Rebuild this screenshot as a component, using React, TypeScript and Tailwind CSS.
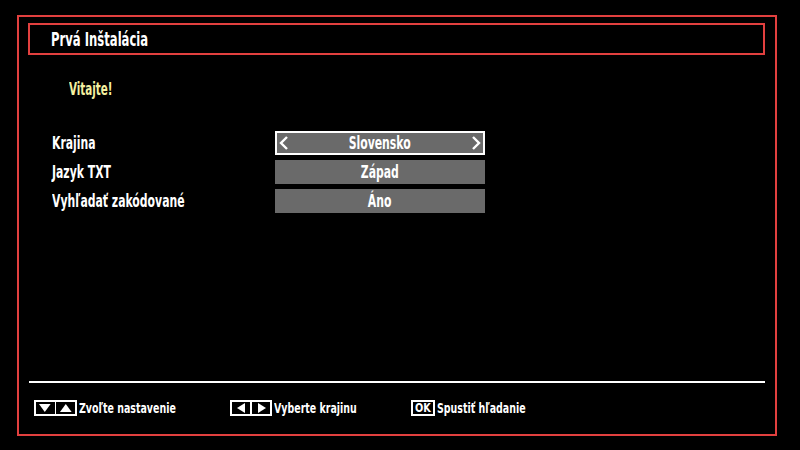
import React from "react";

const font = {
  fontFamily: '"DejaVu Sans Condensed", "DejaVu Sans", sans-serif',
};

function KeyBox({ children, w }: { children: React.ReactNode; w: string }) {
  return (
    <div className={`flex h-[16px] ${w} shrink-0 items-center justify-center gap-[2px] border-2 border-white px-[1px]`}>
      {children}
    </div>
  );
}

function Tri({ dir }: { dir: "up" | "down" | "left" | "right" }) {
  const pts = {
    down: "1,2 13,2 7,10",
    up: "1,10 13,10 7,2",
    left: "10,1 10,11 2,6",
    right: "2,1 2,11 10,6",
  }[dir];
  const wide = dir === "up" || dir === "down";
  return (
    <svg width={wide ? 17 : 15} height={12} viewBox={wide ? "-1 0 16 12" : "-1 0 13 12"}>
      <polygon points={pts} fill="white" />
    </svg>
  );
}

function Chevron({ right }: { right?: boolean }) {
  return (
    <svg width={10} height={16} viewBox="0 0 10 16">
      <polyline
        points={right ? "2,2 8,8 2,14" : "8,2 2,8 8,14"}
        fill="none"
        stroke="white"
        strokeWidth={2.4}
      />
    </svg>
  );
}

export default function App() {
  const rows = [
    { label: "Krajina", value: "Slovensko", active: true },
    { label: "Jazyk TXT", value: "Západ", active: false },
    { label: "Vyhľadať zakódované", value: "Áno", active: false },
  ];

  return (
    <div className="h-[450px] w-[800px] bg-black pl-[17px] pt-[15px] text-white" style={font}>
      <div className="flex h-[421px] w-[760px] flex-col border-2 border-[#e2403f]">
        <div className="ml-[9px] mt-[6px] flex h-[32px] w-[737px] items-center border-2 border-[#e2403f] pl-[21px] text-[19px] font-bold">
          <span className="inline-block origin-left scale-x-[0.68] whitespace-nowrap">Prvá Inštalácia</span>
        </div>

        <div className="ml-[50px] mt-[24px] h-[20px] text-[18px] font-bold leading-[20px] text-[#f4f0a0]">
          <span className="inline-block origin-left scale-x-[0.64]">Vitajte!</span>
        </div>

        <div className="ml-[33px] mt-[32px] flex flex-col gap-[5px]">
          {rows.map((r) => (
            <div key={r.label} className="flex h-[24px] items-center">
              <div className="w-[223px] text-[17px] font-bold leading-none">
                <span className="inline-block origin-left scale-x-[0.71] whitespace-nowrap">{r.label}</span>
              </div>
              <div
                className={`flex h-[24px] w-[210px] items-center justify-between bg-[#6a6a6a] px-[2px] text-[17px] font-bold leading-none ${
                  r.active ? "border-2 border-white" : ""
                }`}
              >
                <span className="flex w-[12px] items-center">{r.active ? <Chevron /> : null}</span>
                <span className="inline-block scale-x-[0.71]">{r.value}</span>
                <span className="flex w-[12px] items-center justify-end">{r.active ? <Chevron right /> : null}</span>
              </div>
            </div>
          ))}
        </div>

        <div className="flex-1" />

        <div className="ml-[10px] h-[2px] w-[736px] bg-white" />

        <div className="ml-[15px] mt-[17px] mb-[18px] flex h-[16px] items-center text-[14px] font-bold leading-none">
          <div className="flex w-[196px] items-center gap-[2px]">
            <KeyBox w="w-[43px]">
              <Tri dir="down" />
              <div className="h-[12px] w-[2px] bg-white" />
              <Tri dir="up" />
            </KeyBox>
            <span className="inline-block origin-left scale-x-[0.75] whitespace-nowrap">Zvoľte nastavenie</span>
          </div>
          <div className="flex w-[181px] items-center gap-[2px]">
            <KeyBox w="w-[42px]">
              <Tri dir="left" />
              <div className="h-[12px] w-[2px] bg-white" />
              <Tri dir="right" />
            </KeyBox>
            <span className="inline-block origin-left scale-x-[0.75] whitespace-nowrap">Vyberte krajinu</span>
          </div>
          <div className="flex items-center gap-[2px]">
            <div className="flex h-[16px] w-[24px] shrink-0 items-center justify-center border-2 border-white bg-black text-[12px] font-bold leading-none text-white">
              <span className="inline-block scale-x-[0.9]">OK</span>
            </div>
            <span className="inline-block origin-left scale-x-[0.75] whitespace-nowrap">Spustiť hľadanie</span>
          </div>
        </div>
      </div>
    </div>
  );
}
